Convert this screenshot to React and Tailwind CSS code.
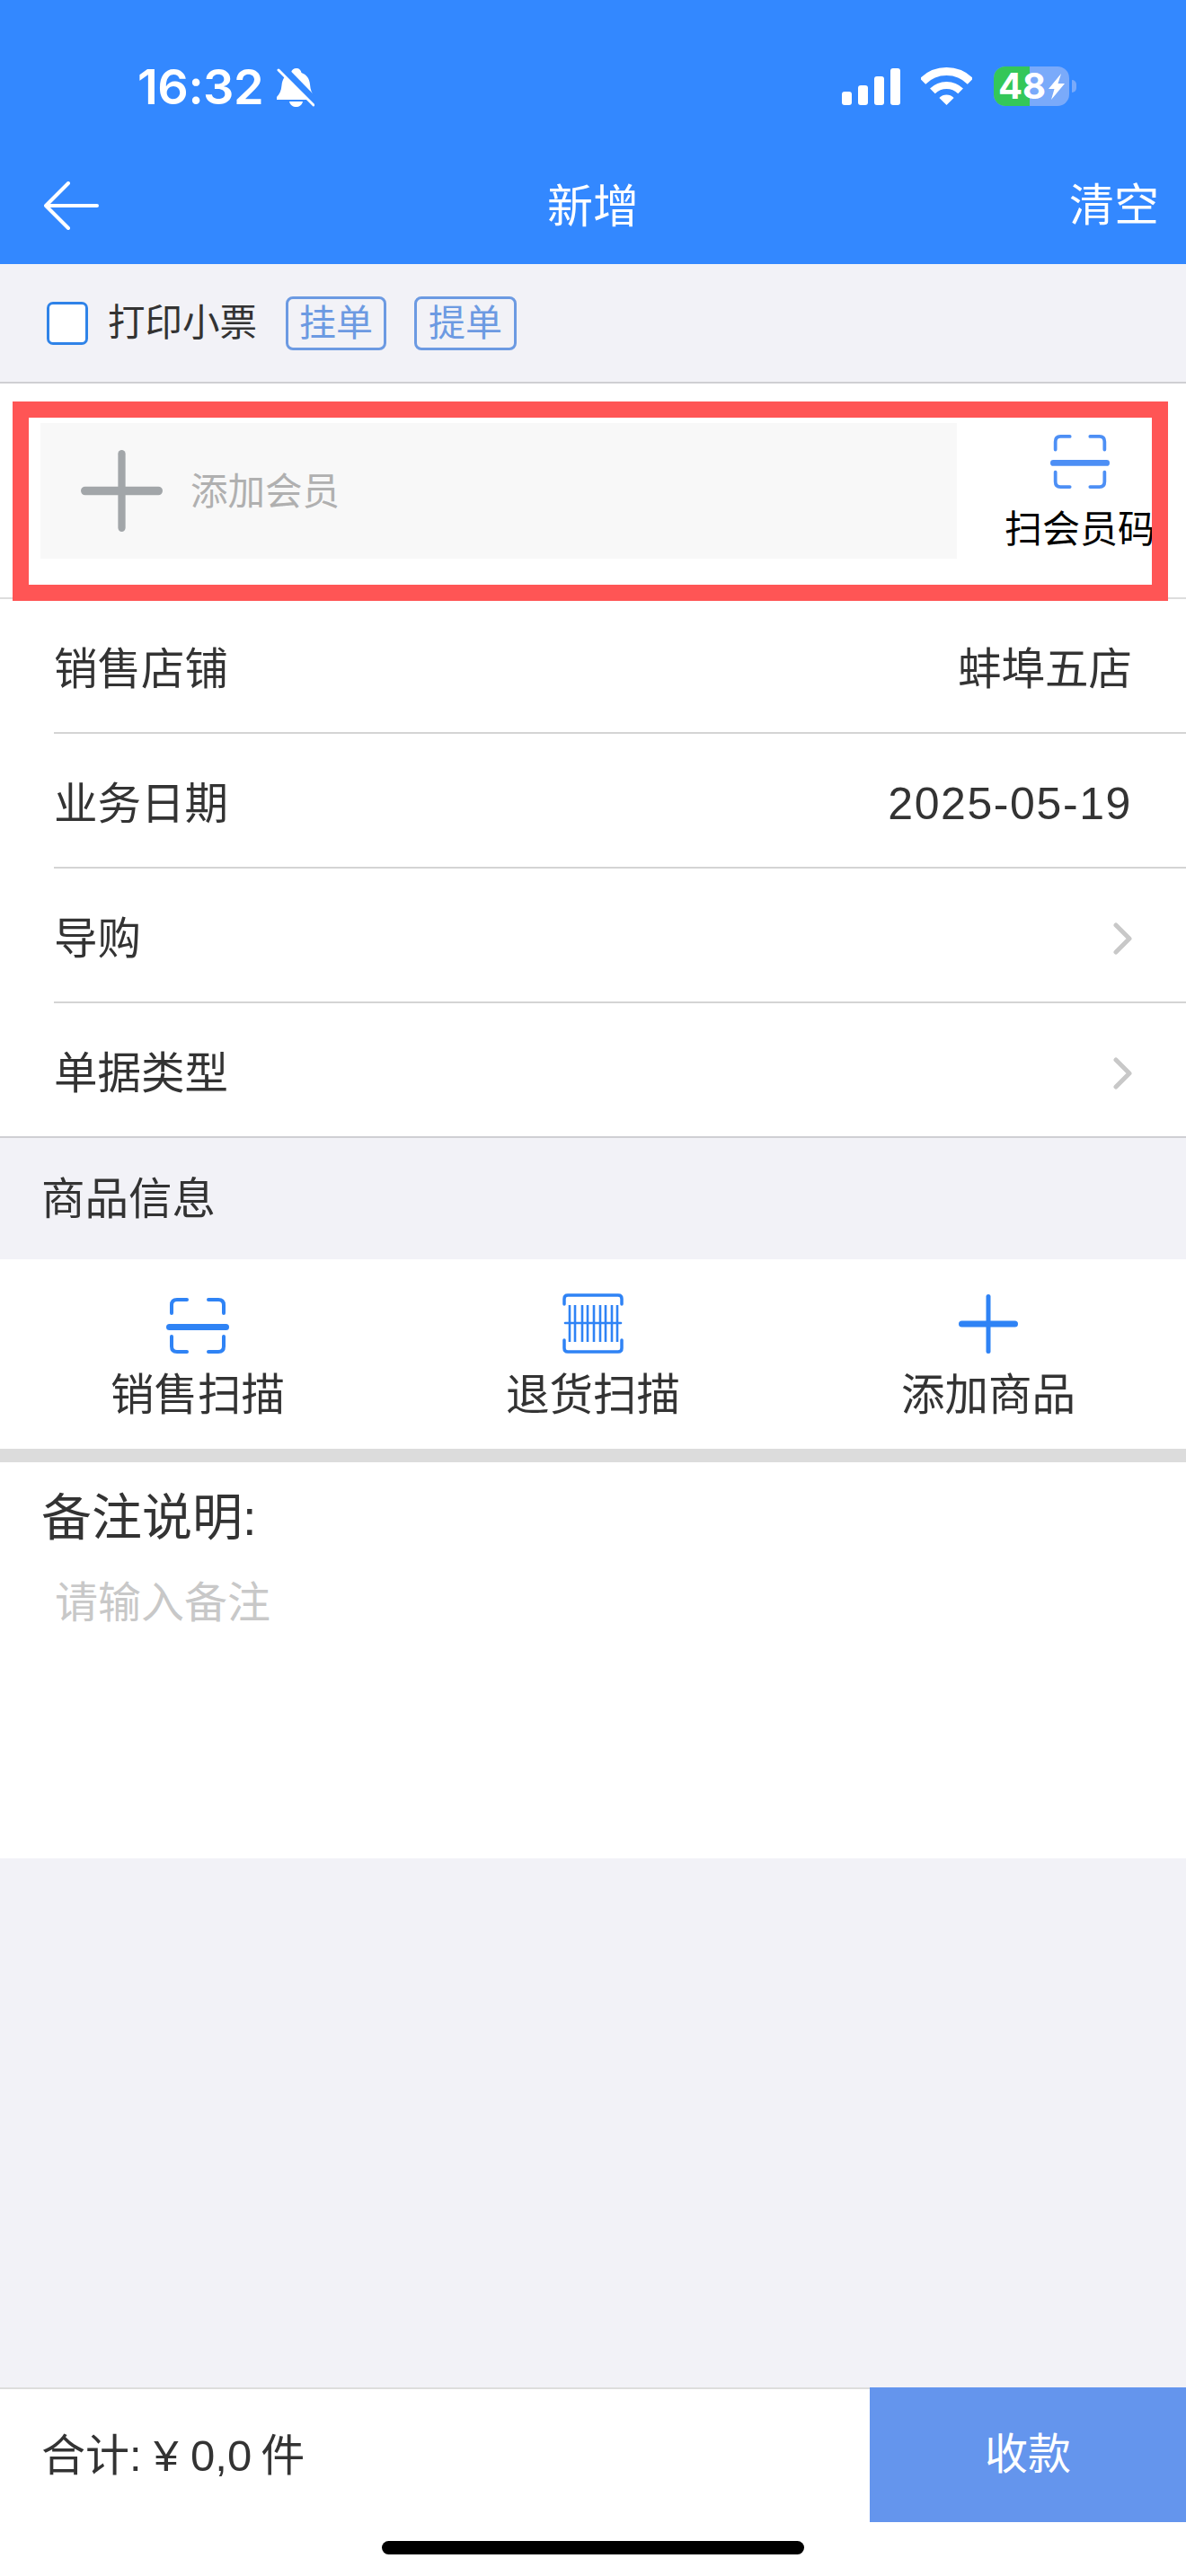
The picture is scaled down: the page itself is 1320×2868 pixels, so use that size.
const ScanIcon = ({ className }) => (
  <svg viewBox="0 0 70 62" preserveAspectRatio="none" className={className} fill="none" stroke="currentColor" strokeWidth="4" strokeLinecap="round">
    <path d="M6 17V8q0-6 6-6h11" />
    <path d="M47 2h11q6 0 6 6v9" />
    <path d="M6 43v11q0 6 6 6h11" />
    <path d="M47 60h11q6 0 6-6V43" />
    <rect x="0" y="29" width="70" height="7" rx="3.5" fill="currentColor" stroke="none" />
  </svg>
)

const BarcodeIcon = ({ className }) => (
  <svg viewBox="0 0 68 67" className={className} fill="none" stroke="currentColor">
    <path d="M2 12V6q0-4 4-4h56q4 0 4 4v6" strokeWidth="3.5" strokeLinecap="round" />
    <path d="M2 52v9q0 4 4 4h56q4 0 4-4v-9" strokeWidth="3.5" strokeLinecap="round" />
    <path d="M8 13v41M14 13v41M22 13v41M28 13v41M35 13v41M42 13v41M48 13v41M55 13v41M61 13v41" strokeWidth="2.6" />
    <path d="M3 33h62" strokeWidth="2.6" strokeLinecap="round" />
  </svg>
)

const PlusIcon = ({ className, bar, stem }) => (
  <svg viewBox="0 0 66 66" className={className} fill="currentColor">
    <rect x={33 - stem / 2} y="0" width={stem} height="66" rx={stem / 2} />
    <rect x="0" y={33 - bar / 2} width="66" height={bar} rx={bar / 2} />
  </svg>
)

const Chevron = () => (
  <svg viewBox="0 0 21 36" className="h-[36px] w-[21px] text-[#c8c8c8]" fill="none" stroke="currentColor" strokeWidth="5" strokeLinecap="round" strokeLinejoin="round">
    <path d="M3 3l15 15L3 33" />
  </svg>
)

const StatusBar = () => (
  <div className="flex h-[174px] items-start justify-between pl-[153px] pr-[122px] pt-[74px] text-white">
    <div className="flex h-[46px] items-center">
      <span className="font-['Inter','Liberation_Sans',sans-serif] text-[54px] leading-[46px] font-semibold tracking-[-0.5px]">16:32</span>
      <svg viewBox="0 0 42 43" className="ml-[15px] h-[43px] w-[42px]">
        <path fill="white" d="M22 0c3 0 5 2 5.500 5 6 2 9 7 9.500 13 .5 6 2 10 5 14v3H0v-3c3-3 5-7 5.500-13 .5-7 4-12 10.500-14.500C16.500 2 19 0 22 0z" />
        <path fill="white" d="M14 37h15c-1 4-4 6-7.500 6S15 41 14 37z" />
        <path stroke="#3388ff" strokeWidth="8" d="M4 -3l40 41" />
        <path stroke="white" strokeWidth="3" strokeLinecap="round" d="M2 2l39 39" />
      </svg>
    </div>
    <div className="flex items-center">
      <div className="flex h-[41px] items-end gap-[7px]">
        <div className="h-[15px] w-[11px] rounded-[3px] bg-white" />
        <div className="h-[22px] w-[11px] rounded-[3px] bg-white" />
        <div className="h-[32px] w-[11px] rounded-[3px] bg-white" />
        <div className="h-[41px] w-[11px] rounded-[3px] bg-white" />
      </div>
      <svg viewBox="0 0 57 42" className="ml-[23px] h-[42px] w-[57px]" fill="none" stroke="white">
        <path strokeWidth="9" d="M2 15.500A37.500 37.500 0 0 1 55 15.500" />
        <path strokeWidth="8" d="M12.900 26.400A22 22 0 0 1 44.100 26.400" />
        <path fill="white" stroke="none" d="M28.500 42l-8.100-8.100a11.500 11.500 0 0 1 16.200 0z" />
      </svg>
      <div className="relative ml-[24px] h-[44px] w-[84px] rounded-[13px] bg-[#7aaafa]">
        <div className="h-full w-[40px] rounded-l-[13px] bg-[#34c759]" />
        <span className="absolute left-[5px] top-0 font-['Inter','Liberation_Sans',sans-serif] text-[40px] leading-[44px] font-bold">48</span>
        <svg viewBox="0 0 18 29" className="absolute left-[61px] top-[8px] h-[29px] w-[18px]" fill="white">
          <path d="M14 0L0 17h6.500L3 29l15-18h-7.500z" />
        </svg>
      </div>
      <div className="ml-[3px] h-[14px] w-[5px] rounded-r-full bg-[#7aaafa]" />
    </div>
  </div>
)

const NavBar = () => (
  <div className="relative flex h-[120px] items-center justify-between pb-[10px] pl-[49px] pr-[30px] text-white">
    <svg viewBox="0 0 61 54" className="h-[54px] w-[61px]" fill="none" stroke="white" strokeWidth="4" strokeLinecap="round" strokeLinejoin="round">
      <path d="M27 2L2 27l25 25M2 27h57" />
    </svg>
    <span className="ml-[20px] pt-[4px] text-[51px] leading-[60px]">新增</span>
    <span className="text-[50px] leading-[60px]">清空</span>
  </div>
)

const Toolbar = () => (
  <div className="flex h-[133px] items-center border-b-2 border-[#cfcfd3] pl-[52px]">
    <div className="h-[48px] w-[46px] rounded-[7px] border-[3px] border-[#2f83e8] bg-white" />
    <span className="ml-[22px] text-[41.5px] leading-[50px] text-[#333]">打印小票</span>
    <button className="ml-[32px] h-[60px] w-[112px] rounded-[8px] border-[3px] border-[#6c9ae2] text-[41px] leading-[50px] text-[#6c9ae2]">挂单</button>
    <button className="ml-[31px] h-[60px] w-[114px] rounded-[8px] border-[3px] border-[#6c9ae2] text-[41px] leading-[50px] text-[#6c9ae2]">提单</button>
  </div>
)

const Member = () => (
  <div className="relative flex h-[240px] items-start border-b-2 border-[#dddddd] bg-white pl-[45px] pt-[44px]">
    <div className="flex h-[151px] w-[1020px] items-center bg-[#f8f8f8] pl-[45px]">
      <PlusIcon className="h-[91px] w-[91px] text-[#a2a6a9]" bar={7} stem={6} />
      <span className="ml-[31px] mt-[2px] text-[41.5px] leading-[50px] text-[#b0b0b0]">添加会员</span>
    </div>
    <div className="ml-[53px] flex flex-col items-center pt-[13px]">
      <ScanIcon className="h-[60px] w-[66px] text-[#4d8ff5]" />
      <span className="mt-[21px] text-[42px] leading-[50px] text-black">扫会员码</span>
    </div>
    {/* red highlight drawn on top of the screenshot */}
    <div className="pointer-events-none absolute left-[14px] top-[20px] h-[222px] w-[1286px] border-[18px] border-[#ff5555]" />
  </div>
)

const Row = ({ label, value, arrow, last }) => (
  <div className={last ? 'bg-white' : 'bg-white pl-[60px]'}>
    <div className={last ? 'flex h-[150px] items-center justify-between border-b-2 border-[#cfcfd3] pl-[60px] pr-[60px] pt-[8px]' : 'flex h-[150px] items-center justify-between border-b-2 border-[#d4d4d4] pr-[60px] pt-[8px]'}>
      <span className="text-[48.5px] leading-[60px] text-[#333]">{label}</span>
      {value && <span className={value.startsWith('2') ? 'text-[50px] leading-[60px] tracking-[1.6px] text-[#333]' : 'text-[48.5px] leading-[60px] text-[#333]'}>{value}</span>}
      {arrow && <Chevron />}
    </div>
  </div>
)

const Action = ({ icon, label }) => (
  <div className="flex flex-col items-center">
    <div className="flex h-[67px] items-end">{icon}</div>
    <span className="mt-[16px] text-[48.5px] leading-[60px] text-[#333]">{label}</span>
  </div>
)

export default function App() {
  return (
    <div className="flex h-[2868px] w-[1320px] flex-col bg-[#f2f2f7] font-['Liberation_Sans','Noto_Sans_CJK_SC',sans-serif]">
      <div className="bg-[#3388ff]">
        <StatusBar />
        <NavBar />
      </div>
      <Toolbar />
      <Member />
      <Row label="销售店铺" value="蚌埠五店" />
      <Row label="业务日期" value="2025-05-19" />
      <Row label="导购" arrow />
      <Row label="单据类型" arrow last />

      <div className="flex h-[135px] items-center pl-[46px] text-[48.5px] leading-[60px] text-[#333]">商品信息</div>

      <div className="grid h-[211px] grid-cols-3 bg-white pt-[38px]">
        <Action icon={<ScanIcon className="h-[62px] w-[70px] text-[#2f83f5]" />} label="销售扫描" />
        <Action icon={<BarcodeIcon className="h-[67px] w-[68px] text-[#2f83f5]" />} label="退货扫描" />
        <Action icon={<PlusIcon className="h-[66px] w-[66px] text-[#2f83f5]" bar={7} stem={5} />} label="添加商品" />
      </div>
      <div className="h-[15px] bg-[#dcdcdc]" />

      <div className="h-[441px] bg-white pl-[46px] pt-[27px]">
        <div className="text-[56px] leading-[70px] text-[#333]">备注说明:</div>
        <div className="ml-[15px] mt-[30px] text-[48px] leading-[60px] text-[#c8c8c8]">请输入备注</div>
      </div>

      <div className="flex-1" />

      <div className="bg-white">
        <div className="flex h-[150px] items-stretch">
          <div className="flex flex-1 items-center border-t-2 border-[#dddddd] pl-[46px] text-[49px] leading-[60px] text-[#333]">
            <span>合计: ¥ 0,0</span>
            <span className="ml-[10px]">件</span>
          </div>
          <button className="w-[352px] bg-[#6495ed] text-[48px] leading-[60px] text-white">收款</button>
        </div>
        <div className="flex h-[60px] justify-center pt-[21px]">
          <div className="h-[15px] w-[470px] rounded-full bg-black" />
        </div>
      </div>
    </div>
  )
}
